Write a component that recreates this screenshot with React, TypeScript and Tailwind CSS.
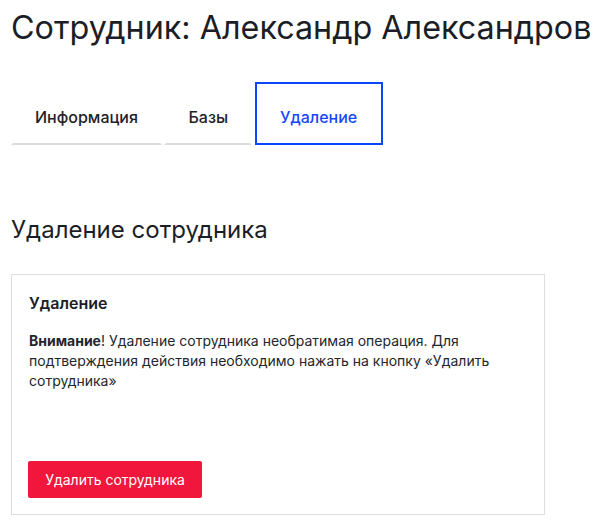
import React from "react";

const tabs = [
  { id: "info", title: "Информация" },
  { id: "bases", title: "Базы" },
  { id: "delete", title: "Удаление" },
];

const Tab = ({ title, active }: { title: string; active: boolean }) => {
  return (
    <button
      className={
        active
          ? "border-2 border-[#0a46ff] px-[23.5px] pt-[21px] pb-[14px] text-base leading-6 font-medium text-[#1747ff]"
          : "border-2 border-transparent border-b-[#dcdcdc] px-[22px] pt-[21px] pb-[14px] text-base leading-6 font-medium text-[#1f2229]"
      }
    >
      {title}
    </button>
  );
};

export default function App() {
  const active = "delete";
  return (
    <div className="min-h-screen bg-white px-[11px] pt-[9px] font-['Inter','Noto_Sans',sans-serif] text-[#1b1e26]">
      <h1 className="text-[32.3px] leading-[38px] font-normal whitespace-nowrap">
        Сотрудник: Александр Александров
      </h1>

      <nav className="mt-[35px] flex gap-[2.5px]">
        {tabs.map((t) => (
          <Tab key={t.id} title={t.title} active={t.id === active} />
        ))}
      </nav>

      <h2 className="mt-[69px] text-2xl leading-8 font-normal">
        Удаление сотрудника
      </h2>

      <section className="mt-[28px] flex min-h-[241px] w-[534px] flex-col border border-[#dedede] px-[16px] pt-[16px] pb-[16px]">
        <h3 className="px-[1px] text-base leading-6 font-semibold">Удаление</h3>
        <p className="mt-[16px] px-[1px] text-sm leading-5 text-[#23262d]">
          <b className="font-bold">Внимание</b>! Удаление сотрудника
          необратимая операция. Для подтверждения действия необходимо нажать на
          кнопку «Удалить сотрудника»
        </p>
        <div className="mt-auto">
          <button className="h-[37px] w-[174px] rounded-[2px] bg-[#f0163c] text-sm text-white">
            Удалить сотрудника
          </button>
        </div>
      </section>
    </div>
  );
}
